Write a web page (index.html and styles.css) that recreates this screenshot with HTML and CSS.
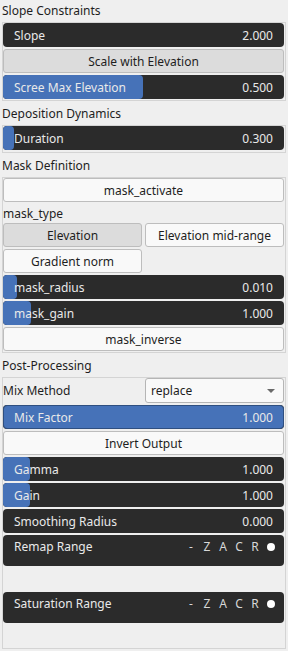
FILE: index.html
```html
<!DOCTYPE html>
<html>
<head>
<meta charset="utf-8">
<link rel="stylesheet" href="styles.css">
</head>
<body>
<div class="panel">
  <div class="title">Slope Constraints</div>
  <div class="group">
    <div class="slider"><span>Slope</span><span>2.000</span></div>
    <div class="btn on">Scale with Elevation</div>
    <div class="slider"><div class="fill" style="width:140px"></div><span>Scree Max Elevation</span><span>0.500</span></div>
  </div>

  <div class="title">Deposition Dynamics</div>
  <div class="group single">
    <div class="slider"><div class="fill" style="width:11px"></div><span>Duration</span><span>0.300</span></div>
  </div>

  <div class="title">Mask Definition</div>
  <div class="group">
    <div class="btn">mask_activate</div>
    <div class="label">mask_type</div>
    <div class="pair">
      <div class="btn on">Elevation</div>
      <div class="btn">Elevation mid-range</div>
      <div class="btn">Gradient norm</div>
    </div>
    <div class="slider"><div class="fill" style="width:14px"></div><span>mask_radius</span><span>0.010</span></div>
    <div class="slider"><div class="fill" style="width:28px"></div><span>mask_gain</span><span>1.000</span></div>
    <div class="btn">mask_inverse</div>
  </div>

  <div class="title">Post-Processing</div>
  <div class="group">
    <div class="combo-row">
      <div class="combo-label">Mix Method</div>
      <div class="combo"><span>replace</span><span class="arrow"></span></div>
    </div>
    <div class="slider"><div class="fill full" style="width:100%"></div><span>Mix Factor</span><span>1.000</span></div>
    <div class="btn">Invert Output</div>
    <div class="slider"><div class="fill" style="width:27px"></div><span>Gamma</span><span>1.000</span></div>
    <div class="slider"><div class="fill" style="width:27px"></div><span>Gain</span><span>1.000</span></div>
    <div class="slider"><span>Smoothing Radius</span><span>0.000</span></div>
    <div class="range-block">
      <div class="range"><span>Remap Range</span><span class="modes"><i>-</i><i>Z</i><i>A</i><i>C</i><i>R</i><b class="dot"></b></span></div>
      <div class="range-space"></div>
    </div>
    <div class="range-block">
      <div class="range"><span>Saturation Range</span><span class="modes"><i>-</i><i>Z</i><i>A</i><i>C</i><i>R</i><b class="dot"></b></span></div>
      <div class="range-space"></div>
    </div>
  </div>
</div>
</body>
</html>
```

FILE: styles.css
```css
* { box-sizing: border-box; }
body {
  margin: 0;
  background: #efefef;
  font-family: "Noto Sans", "Open Sans", sans-serif;
  font-size: 12px;
  color: #1e1e1e;
}
.panel {
  padding: 0 2px;
  display: flex;
  flex-direction: column;
}
.title {
  height: 22px;
  line-height: 21px;
  padding-left: 0;
  white-space: nowrap;
}
.group {
  border: 1px solid #d4d4d4;
  display: flex;
  flex-direction: column;
  gap: 2px;
  padding: 0 1px 1px 0;
  margin-bottom: 2px;
}
.group.single { padding-bottom: 2px; }
.slider {
  position: relative;
  height: 24px;
  background: #2b2b2b;
  border-radius: 4px;
  color: #e9e9e9;
  display: flex;
  justify-content: space-between;
  align-items: center;
  padding: 0 11px;
  white-space: nowrap;
}
.slider span { position: relative; }
.fill {
  position: absolute;
  left: 0;
  top: 0;
  bottom: 0;
  background: #4672b8;
  border-radius: 4px;
}
.fill.full { border: 1px solid #2f4f80; }
.btn {
  height: 24px;
  border: 1px solid #bdbdbd;
  border-radius: 3px;
  background: #f9f9f9;
  display: flex;
  align-items: center;
  justify-content: center;
  white-space: nowrap;
}
.btn.on { background: #dcdcdc; }
.label {
  height: 17px;
  line-height: 19px;
  padding-left: 0;
}
.pair {
  display: grid;
  grid-template-columns: 1fr 1fr;
  column-gap: 3px;
  row-gap: 2px;
}
.combo-row {
  display: grid;
  grid-template-columns: 1fr 1fr;
  column-gap: 3px;
  height: 25px;
  align-items: center;
}
.combo-label { padding-left: 0; }
.combo {
  height: 25px;
  border: 1px solid #b5b5b5;
  border-radius: 3px;
  background: #f9f9f9;
  display: flex;
  align-items: center;
  justify-content: space-between;
  padding: 0 8px 0 5px;
}
.arrow {
  width: 0;
  height: 0;
  border-left: 4px solid transparent;
  border-right: 4px solid transparent;
  border-top: 4px solid #6a6a6a;
}
.range-block {
  display: flex;
  flex-direction: column;
}
.range {
  height: 31px;
  background: #2b2b2b;
  border-radius: 4px;
  color: #e9e9e9;
  display: flex;
  justify-content: space-between;
  align-items: flex-start;
  line-height: 24px;
  padding: 0 9px 0 11px;
  white-space: nowrap;
}
.modes {
  display: flex;
  align-items: center;
  height: 24px;
}
.modes i {
  font-style: normal;
  width: 16px;
  text-align: center;
  color: #d8d8d8;
}
.dot {
  width: 8px;
  height: 8px;
  border-radius: 50%;
  background: #ffffff;
  margin-left: 4px;
}
.range-space { height: 24px; }
```
